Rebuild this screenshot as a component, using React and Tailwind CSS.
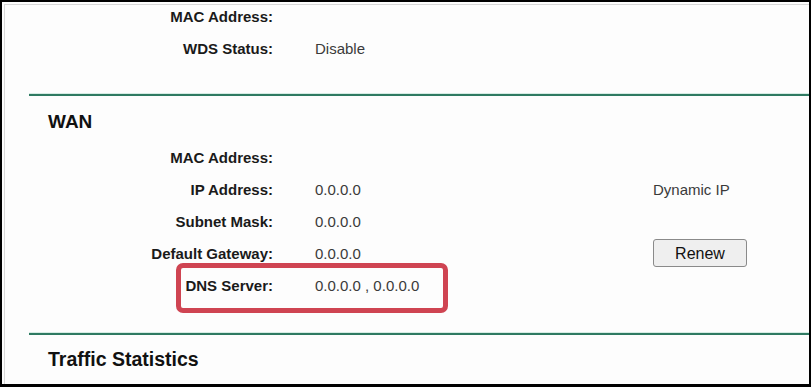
const Row = ({ label, value, extra }) => (
  <div className="flex h-[22px] items-center">
    <div className="w-[268px] text-right font-bold text-[#1a1a1a]">{label}</div>
    <div className="ml-[42px] w-[338px] text-[#3a3a3a]">{value}</div>
    <div className="flex items-center text-[#3a3a3a]">{extra}</div>
  </div>
);

const Divider = ({ className }) => (
  <div className={`ml-[24px] ${className}`}>
    <div className="h-px bg-[#d6ece4]" />
    <div className="h-[2px] bg-[#2f7a62]" />
  </div>
);

export default function App() {
  return (
    <div
      className="relative h-[387px] w-[811px] overflow-hidden border-t-2 border-r-2 border-b-[3px] border-l-2 border-black bg-[#fdfdfd] pt-[2px] pl-[2px] text-[15px] leading-[17px]"
      style={{ fontFamily: '"Liberation Sans", Arial, sans-serif' }}
    >
      <div className="h-full border-t border-l border-[#d8d8d8]">
        {/* Wireless section (tail) */}
        <div className="flex flex-col gap-[10px]">
          <Row label="MAC Address:" value="" />
          <Row label="WDS Status:" value="Disable" />
        </div>

        <Divider className="mt-[34px]" />

        {/* WAN */}
        <h2 className="mt-[14px] flex h-[22px] items-center pl-[43px] text-[19px] font-bold text-[#111]">
          WAN
        </h2>
        <div className="mt-[14px] flex flex-col gap-[10px]">
          <Row label="MAC Address:" value="" />
          <Row label="IP Address:" value="0.0.0.0" extra="Dynamic IP" />
          <Row label="Subnet Mask:" value="0.0.0.0" />
          <Row
            label="Default Gateway:"
            value="0.0.0.0"
            extra={
              <button className="-my-[3px] h-[28px] w-[94px] rounded-[3px] border border-[#8a8a8a] bg-[#efefef] text-[16px] text-[#111]">
                Renew
              </button>
            }
          />
          <Row label="DNS Server:" value="0.0.0.0 , 0.0.0.0" />
        </div>

        <Divider className="mt-[36px]" />

        <h2 className="mt-[13px] flex h-[22px] items-center pl-[43px] text-[19.5px] font-bold text-[#111]">
          Traffic Statistics
        </h2>
      </div>

      {/* highlight around DNS Server */}
      <div className="absolute top-[261px] left-[174px] h-[50px] w-[272px] rounded-[7px] border-[5px] border-[#cf4452]" />
    </div>
  );
}
